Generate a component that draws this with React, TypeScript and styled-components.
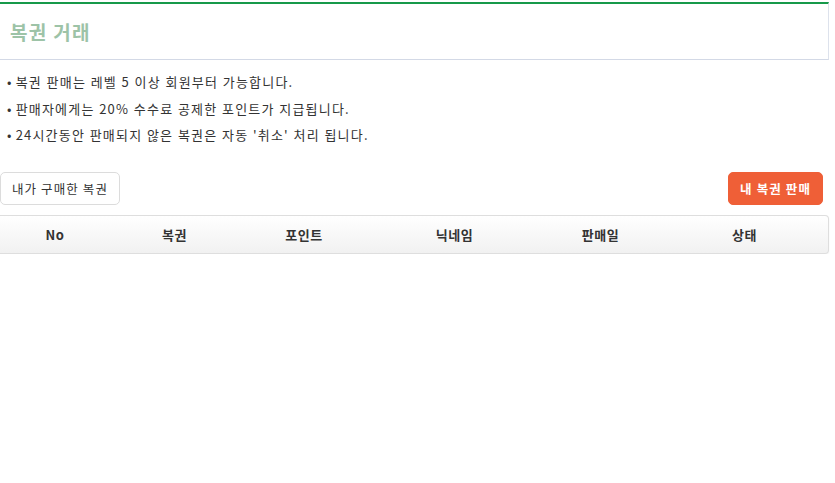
import React from 'react';
import styled, { createGlobalStyle } from 'styled-components';

const Global = createGlobalStyle`
	body {
		margin: 0;
		background: #fff;
		font-family: 'Noto Sans CJK KR', 'Noto Sans', 'Liberation Sans', sans-serif;
		color: #333;
	}
`;

const Page = styled.div`
	width: 835px;
	padding-top: 2px;
`;

const TitleBar = styled.div`
	width: 818px;
	height: 55px;
	padding-left: 10px;
	border-top: 2px solid #17994a;
	border-right: 1px solid #dde2ec;
	border-bottom: 1px solid #d3d9e6;
	display: flex;
	align-items: center;
`;

const Title = styled.h2`
	margin: 0;
	font-size: 19px;
	font-weight: 700;
	color: #9dc3a7;
	letter-spacing: 1.3px;
`;

const Notes = styled.ul`
	list-style: none;
	margin: 9px 0 0;
	padding: 0 0 0 7px;
`;

const Note = styled.li`
	font-size: 13px;
	line-height: 26.6px;
	letter-spacing: 1.2px;
	word-spacing: 0.5px;
	color: #333;
	&::before {
		content: '•';
		margin-right: 3px;
	}
`;

const Toolbar = styled.div`
	width: 823px;
	display: flex;
	justify-content: space-between;
	align-items: center;
	margin-top: 23px;
`;

const Button = styled.button<{ $primary?: boolean }>`
	height: 33px;
	padding: 0 11px;
	border-radius: 5px;
	font-family: inherit;
	font-size: 12.5px;
	font-weight: ${p => (p.$primary ? 700 : 400)};
	color: ${p => (p.$primary ? '#fff' : '#333')};
	background: ${p => (p.$primary ? '#ef5f37' : '#fff')};
	border: 1px solid ${p => (p.$primary ? '#ef5f37' : '#dcdcdc')};
	letter-spacing: 1.1px;
	cursor: pointer;
`;

const TableHead = styled.div`
	width: 828px;
	height: 37px;
	margin-top: 10px;
	display: grid;
	grid-template-columns: 110px 129px 130px 171px 121px 1fr;
	align-items: center;
	background: linear-gradient(#fff, #f1f1f1);
	border: 1px solid #dedede;
	border-left: none;
	border-radius: 0 4px 4px 0;
	box-shadow: 0 1px 2px rgba(0, 0, 0, 0.06);
`;

const HeadCell = styled.div`
	text-align: center;
	font-size: 13px;
	font-weight: 700;
	color: #333;
	letter-spacing: 0.5px;
`;

const notes = [
	'복권 판매는 레벨 5 이상 회원부터 가능합니다.',
	'판매자에게는 20% 수수료 공제한 포인트가 지급됩니다.',
	"24시간동안 판매되지 않은 복권은 자동 '취소' 처리 됩니다.",
];

const columns = ['No', '복권', '포인트', '닉네임', '판매일', '상태'];

export default function App() {
	return (
		<Page>
			<Global />
			<TitleBar>
				<Title>복권 거래</Title>
			</TitleBar>
			<Notes>
				{notes.map(n => (
					<Note key={n}>{n}</Note>
				))}
			</Notes>
			<Toolbar>
				<Button>내가 구매한 복권</Button>
				<Button $primary>내 복권 판매</Button>
			</Toolbar>
			<TableHead>
				{columns.map(c => (
					<HeadCell key={c}>{c}</HeadCell>
				))}
			</TableHead>
		</Page>
	);
}
